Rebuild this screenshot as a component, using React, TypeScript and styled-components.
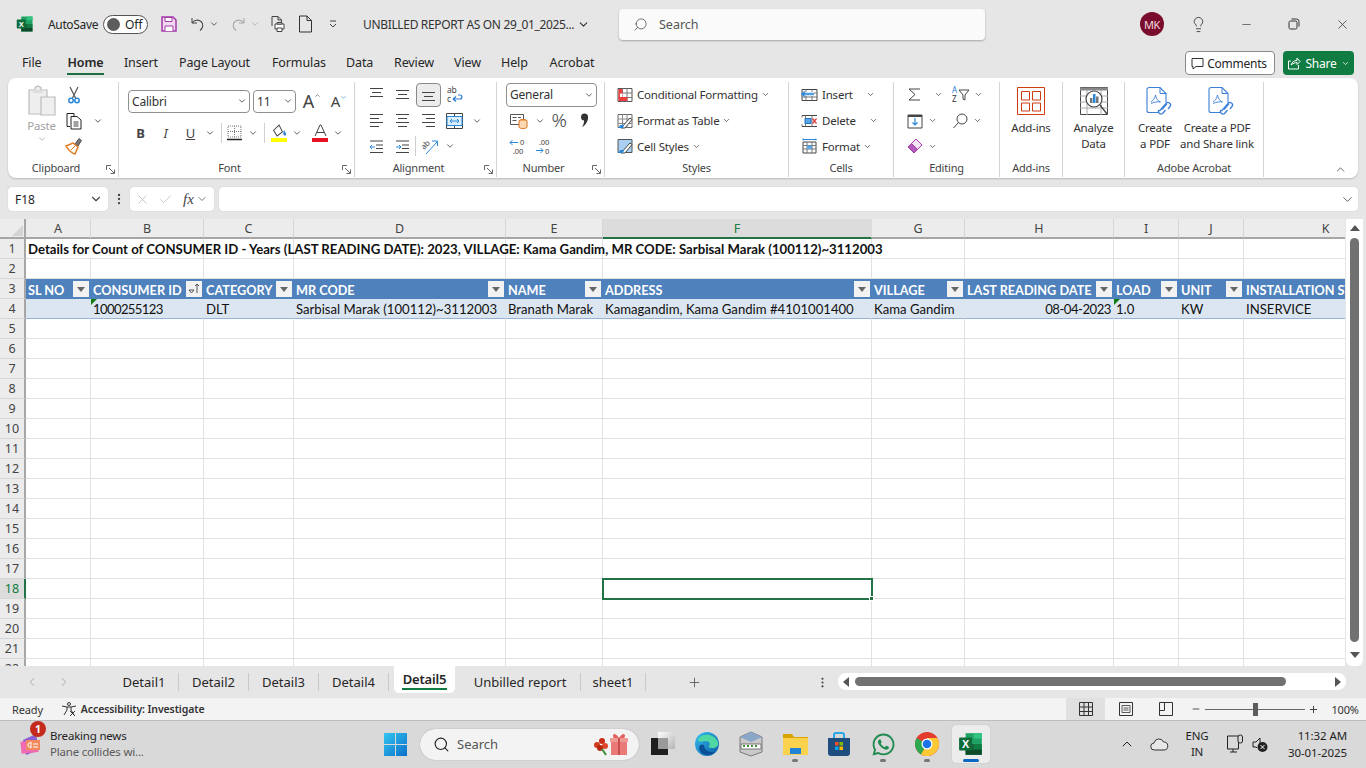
import React, {FC, ReactNode} from "react";
import styled, {createGlobalStyle} from "styled-components";
import {ChevronDown, ChevronUp, ChevronLeft, ChevronRight, Search as SearchGlyph, Lightbulb, Minus, X, Plus, MoreVertical, Check} from "lucide-react";
import {FaWhatsapp} from "react-icons/fa";

const UI = `"Noto Sans", "Liberation Sans", sans-serif`;
const CELL = `Lato, "Liberation Sans", sans-serif`;

const Global = createGlobalStyle`
html, body { margin: 0; padding: 0; background: #e6e6e6; }
body { font-family: ${UI}; color: #262626; overflow: hidden; }
svg { display: block; overflow: visible; }
`;

const Page = styled.div`
width: 1366px;
height: 768px;
display: flex;
flex-direction: column;
overflow: hidden;
background: #e6e6e6;
`;

/* ---------- generic bits ---------- */
const Slot = styled.div<{$w: number; $ml?: number}>`
flex: none;
width: ${p => p.$w}px;
margin-left: ${p => p.$ml || 0}px;
display: flex;
align-items: center;
justify-content: center;
`;
const Chev: FC<{size?: number; color?: string}> = ({size = 10, color = "#444"}) =>
  <ChevronDown size={size} color={color} strokeWidth={2}/>;

/* ---------- title bar ---------- */
const TitleBar = styled.div`
height: 48px;
flex: none;
display: flex;
align-items: center;
padding-left: 16px;
font-size: 12px;
`;
const AutoSave = styled.span`
margin-left: 14px;
width: 49px;
letter-spacing: -0.35px;
white-space: nowrap;
`;
const Toggle = styled.div`
margin-left: 6px;
width: 45px;
height: 19px;
box-sizing: border-box;
border: 1px solid #555;
border-radius: 10px;
background: #fff;
display: flex;
align-items: center;
padding-left: 3px;
gap: 5px;
font-size: 12px;
&::before { content: ""; width: 13px; height: 13px; border-radius: 50%; background: #5c5c5c; }
`;
const DocTitle = styled.div`
margin-left: 20px;
width: 256px;
flex: none;
display: flex;
align-items: center;
gap: 3px;
font-size: 12px;
letter-spacing: -0.34px;
white-space: nowrap;
color: #333;
`;
const SearchBox = styled.div`
width: 366px;
height: 31px;
flex: none;
background: #fafafa;
border-radius: 4px;
box-shadow: 0 1px 2px rgba(0,0,0,.28);
display: flex;
align-items: center;
gap: 11px;
padding-left: 14px;
box-sizing: border-box;
font-size: 12.5px;
color: #555;
`;
const Avatar = styled.div`
margin-left: 155px;
margin-right: 10px;
width: 24px;
height: 24px;
flex: none;
border-radius: 50%;
background: #7a0c2e;
color: #f1d9de;
font-size: 11px;
display: flex;
align-items: center;
justify-content: center;
letter-spacing: -0.3px;
`;

/* ---------- tab row ---------- */
const TabRow = styled.div`
height: 30px;
flex: none;
display: flex;
align-items: center;
padding: 0 12px 0 22px;
font-size: 12.5px;
`;
const MenuTab = styled.div<{$active?: boolean; $w: number}>`
position: relative;
width: ${p => p.$w}px;
flex: none;
white-space: nowrap;
text-align: center;
font-weight: ${p => (p.$active ? 600 : 400)};
letter-spacing: -0.12px;
height: 30px;
line-height: 30px;
&::after {
  content: "";
  display: ${p => (p.$active ? "block" : "none")};
  position: absolute;
  left: 0;
  right: 0;
  bottom: 3px;
  height: 2px;
  background: #1b6f43;
}
`;
const TabGap = styled.div<{$w: number}>`
width: ${p => p.$w}px;
flex: none;
`;
const Comments = styled.div`
margin-left: auto;
width: 90px;
height: 24px;
box-sizing: border-box;
background: #fff;
border: 1px solid #8a8a8a;
border-radius: 4px;
display: flex;
align-items: center;
justify-content: center;
gap: 3px;
padding-right: 2px;
font-size: 12px;
letter-spacing: -0.25px;
`;
const Share = styled.div`
margin-left: 8px;
width: 71px;
height: 24px;
background: #107c41;
color: #fff;
border-radius: 4px;
display: flex;
align-items: center;
justify-content: center;
gap: 4px;
font-size: 12px;
letter-spacing: -0.2px;
`;

/* ---------- ribbon ---------- */
const Ribbon = styled.div`
height: 100px;
flex: none;
margin: 0 8px;
background: #fff;
border-radius: 8px;
box-shadow: 0 1px 2px rgba(0,0,0,.2);
display: flex;
padding: 4px 0 1px;
box-sizing: border-box;
font-size: 11.5px;
letter-spacing: -0.2px;
color: #333;
`;
const Group = styled.div<{$w: number; $last?: boolean}>`
width: ${p => p.$w}px;
flex: none;
box-sizing: border-box;
display: flex;
flex-direction: column;
position: relative;
border-right: ${p => (p.$last ? "none" : "1px solid #d4d4d4")};
`;
const GroupBody = styled.div<{$pl?: number}>`
flex: 1;
display: flex;
padding-left: ${p => p.$pl || 0}px;
min-height: 0;
`;
const GroupLabel = styled.div<{$launch?: boolean}>`
height: 18px;
line-height: 18px;
font-size: 11px;
text-align: center;
color: #444;
padding-right: ${p => (p.$launch ? 14 : 0)}px;
`;
const Launcher = styled.div`
position: absolute;
right: 3px;
bottom: 3px;
width: 9px;
height: 9px;
`;
const Stack = styled.div`
display: flex;
flex-direction: column;
`;
const ToolRow = styled.div<{$h?: number}>`
height: ${p => p.$h || 26}px;
display: flex;
align-items: center;
white-space: nowrap;
`;
const PasteBtn = styled.div`
width: 47px;
margin-left: 10px;
display: flex;
flex-direction: column;
align-items: center;
color: #a3a3a3;
font-size: 11.5px;
gap: 1px;
padding-top: 3px;
`;
const Combo = styled.div<{$w: number; $ml?: number; $h?: number}>`
width: ${p => p.$w}px;
height: ${p => p.$h || 23}px;
margin-left: ${p => p.$ml || 0}px;
box-sizing: border-box;
border: 1px solid #8f8f8f;
border-radius: 4px;
display: flex;
align-items: center;
justify-content: space-between;
padding: 0 2px 0 3px;
font-size: 12px;
background: #fff;
flex: none;
`;
const VSep = styled.div`
width: 1px;
height: 20px;
background: #cfcfcf;
flex: none;
`;
const Selected = styled.div`
width: 25px;
height: 24px;
border: 1px solid #8a8a8a;
border-radius: 4px;
background: #ececec;
display: flex;
align-items: center;
justify-content: center;
flex: none;
box-sizing: border-box;
`;
const BoldGlyph = styled.span<{$italic?: boolean; $under?: boolean; $bold?: boolean}>`
font-size: 13px;
font-weight: ${p => (p.$bold ? 700 : 400)};
font-style: ${p => (p.$italic ? "italic" : "normal")};
text-decoration: ${p => (p.$under ? "underline" : "none")};
color: #444;
`;
const SizeGlyph = styled.span<{$s: number}>`
font-size: ${p => p.$s}px;
line-height: 1;
color: #444;
display: flex;
`;
const Percent = styled.span`
font-size: 19px;
line-height: 1;
font-weight: 300;
color: #444;
`;
const LargeBtn = styled.div<{$w: number}>`
width: ${p => p.$w}px;
flex: none;
display: flex;
flex-direction: column;
align-items: center;
padding-top: 5px;
text-align: center;
line-height: 16px;
font-size: 11.5px;
white-space: nowrap;
`;
const LargeIcon = styled.div<{$dx?: number}>`
height: 33px;
display: flex;
justify-content: center;
margin-left: ${p => p.$dx || 0}px;
`;
const StyleText = styled.span`
margin-left: 4px;
margin-right: 3px;
font-size: 11.5px;
`;
const Collapse = styled.div`
margin-top: auto;
align-self: flex-end;
margin-right: 11px;
margin-bottom: 1px;
`;

/* ---------- formula bar ---------- */
const FormulaBar = styled.div`
margin: 9px 8px 8px;
height: 24px;
flex: none;
display: flex;
align-items: center;
`;
const NameBox = styled.div`
width: 100px;
height: 24px;
background: #fff;
border-radius: 4px;
box-shadow: 0 0 1px rgba(0,0,0,.25);
box-sizing: border-box;
padding: 0 5px 0 7px;
display: flex;
align-items: center;
justify-content: space-between;
font-size: 12px;
flex: none;
`;
const FxBox = styled.div`
width: 84px;
height: 24px;
background: #fff;
border-radius: 4px;
box-shadow: 0 0 1px rgba(0,0,0,.25);
display: flex;
align-items: center;
padding-left: 5px;
gap: 8px;
box-sizing: border-box;
flex: none;
`;
const FxText = styled.span`
font-family: "Liberation Serif", serif;
font-style: italic;
font-size: 15px;
color: #444;
margin-left: 2px;
margin-right: -6px;
`;
const FormulaInput = styled.div`
flex: 1;
margin-left: 5px;
height: 24px;
background: #fff;
border-radius: 4px;
box-shadow: 0 0 1px rgba(0,0,0,.25);
display: flex;
align-items: center;
justify-content: flex-end;
padding-right: 3px;
`;

/* ---------- sheet ---------- */
const SheetWrap = styled.div`
height: 447px;
flex: none;
display: flex;
`;
const Sheet = styled.div`
width: 1345px;
height: 447px;
overflow: hidden;
background: #fff;
flex: none;
`;
const COLS = "26px 65px 113px 90px 212px 97px 269px 93px 149px 65px 65px 164px";
const SheetRow = styled.div`
display: grid;
grid-template-columns: ${COLS};
grid-template-rows: 20px;
height: 20px;
`;
const Corner = styled.div`
background: #ececec;
border-right: 2px solid #a6a6a6;
border-bottom: 2px solid #a6a6a6;
box-sizing: border-box;
display: flex;
align-items: flex-end;
justify-content: flex-end;
padding: 0 1px 1px 0;
`;
const ColHead = styled.div<{$on?: boolean}>`
box-sizing: border-box;
background: ${p => (p.$on ? "#dcdcdc" : "#ececec")};
color: ${p => (p.$on ? "#107c41" : "#444")};
border-right: 1px solid ${p => (p.$on ? "#dcdcdc" : "#d6d6d6")};
border-bottom: 2px solid ${p => (p.$on ? "#217346" : "#a6a6a6")};
font-size: 12.5px;
line-height: 19px;
text-align: center;
`;
const RowHead = styled.div<{$on?: boolean}>`
box-sizing: border-box;
background: ${p => (p.$on ? "#dcdcdc" : "#ececec")};
color: ${p => (p.$on ? "#107c41" : "#444")};
border-right: 2px solid ${p => (p.$on ? "#217346" : "#a6a6a6")};
border-bottom: 1px solid #d6d6d6;
font-size: 12.5px;
line-height: 19px;
text-align: center;
`;
const Cell = styled.div<{$kind?: "plain" | "head" | "band" | "title"; $right?: boolean; $sel?: boolean; $flag?: boolean; $tight?: number}>`
position: relative;
box-sizing: border-box;
min-width: 0;
white-space: nowrap;
font-family: ${CELL};
font-size: ${p => (p.$kind === "head" ? 12.7 : p.$kind === "title" ? 13.2 : 13.15)}px;
letter-spacing: ${p => p.$tight || 0}px;
line-height: 19px;
padding: 2px 2px 0;
display: flex;
align-items: center;
justify-content: ${p => (p.$right ? "flex-end" : "flex-start")};
color: ${p => (p.$kind === "head" ? "#fff" : "#111")};
font-weight: ${p => (p.$kind === "head" || p.$kind === "title" ? 700 : 400)};
background: ${p => (p.$kind === "head" ? "#4f81bd" : p.$kind === "band" ? "#dce6f1" : "#fff")};
border-right: 1px solid ${p => (p.$kind === "head" ? "#4f81bd" : p.$kind === "band" ? "#dce6f1" : "#e1e1e1")};
border-bottom: 1px solid ${p => (p.$kind === "head" ? "#4f81bd" : p.$kind === "band" ? "#95b3d7" : "#e1e1e1")};
${p => p.$kind === "title" && "border-right: none; overflow: visible; z-index: 1; background: transparent;"}
${p => p.$kind === "head" && "justify-content: space-between; overflow: hidden; padding-top: 1px;"}
${p => p.$sel && `
  outline: 2px solid #217346;
  outline-offset: -1px;
  z-index: 2;
  &::after {
    content: "";
    position: absolute;
    right: -3px;
    bottom: -3px;
    width: 5px;
    height: 5px;
    background: #217346;
    border: 1px solid #fff;
    box-sizing: border-box;
  }
`}
${p => p.$flag && `
  &::before {
    content: "";
    position: absolute;
    left: 0;
    top: 0;
    border-top: 6px solid #107c10;
    border-right: 6px solid transparent;
  }
`}
`;
const HeadText = styled.span`
position: relative;
top: 1px;
`;
const FilterBtn = styled.div`
width: 16px;
height: 16px;
flex: none;
margin-right: -1px;
background: #f2f2f2;
display: flex;
align-items: center;
justify-content: center;
`;
const ScrollCol = styled.div`
width: 17px;
margin-left: 1px;
height: 447px;
flex: none;
background: #fff;
border-radius: 0 0 6px 6px;
display: flex;
flex-direction: column;
align-items: center;
`;
const ScrollThumbV = styled.div`
width: 9px;
height: 404px;
margin: 3px 0 4px;
border-radius: 5px;
background: #717171;
`;
const ArrowBtn = styled.div`
height: 14px;
margin-top: 2px;
display: flex;
align-items: center;
justify-content: center;
`;

/* ---------- sheet tabs ---------- */
const SheetBar = styled.div`
height: 32px;
flex: none;
display: flex;
align-items: flex-start;
background: #e6e6e6;
font-size: 13px;
`;
const SheetTab = styled.div<{$w: number; $active?: boolean; $gap?: number}>`
position: relative;
width: ${p => p.$w}px;
height: ${p => (p.$active ? 27 : 18)}px;
margin-top: ${p => (p.$active ? 0 : 7)}px;
margin-left: ${p => p.$gap || 0}px;
line-height: ${p => (p.$active ? 26 : 18)}px;
flex: none;
box-sizing: border-box;
text-align: center;
white-space: nowrap;
letter-spacing: ${p => (p.$active ? "-0.2px" : "0")};
font-weight: ${p => (p.$active ? 600 : 400)};
background: ${p => (p.$active ? "#fff" : "transparent")};
border-radius: ${p => (p.$active ? "0 0 5px 5px" : "0")};
border-right: ${p => (p.$active ? "none" : "1px solid #c9c9c9")};
&::after {
  content: "";
  display: ${p => (p.$active ? "block" : "none")};
  position: absolute;
  left: 8px;
  right: 8px;
  bottom: 3px;
  height: 2px;
  background: #107c41;
}
`;
const NavSlot = styled(Slot)`
height: 32px;
`;
const HScroll = styled.div`
width: 508px;
height: 17px;
margin: 7px 0 0 6px;
flex: none;
background: #fff;
border-radius: 8px;
display: flex;
align-items: center;
padding: 0 5px 0 5px;
box-sizing: border-box;
`;
const HThumb = styled.div`
width: 431px;
height: 9px;
margin-left: 6px;
border-radius: 5px;
background: #717171;
`;
const Triangle = styled.div<{$dir: "left" | "right" | "up" | "down"}>`
width: 0;
height: 0;
flex: none;
${p => p.$dir === "left" && "border-top: 5px solid transparent; border-bottom: 5px solid transparent; border-right: 6px solid #555;"}
${p => p.$dir === "right" && "border-top: 5px solid transparent; border-bottom: 5px solid transparent; border-left: 6px solid #555; margin-left: auto;"}
${p => p.$dir === "up" && "border-left: 5px solid transparent; border-right: 5px solid transparent; border-bottom: 6px solid #555;"}
${p => p.$dir === "down" && "border-left: 5px solid transparent; border-right: 5px solid transparent; border-top: 6px solid #555;"}
`;

/* ---------- status bar ---------- */
const StatusBar = styled.div`
height: 22px;
flex: none;
background: #f3f3f3;
border-bottom: 1px solid #bdbdbd;
display: flex;
align-items: center;
padding-left: 12px;
font-size: 11px;
color: #333;
letter-spacing: -0.15px;
`;
const A11y = styled.span`
margin-left: 4px;
font-weight: 600;
font-size: 10.5px;
letter-spacing: -0.1px;
`;
const ViewBtn = styled.div<{$w: number; $on?: boolean; $ml?: number}>`
width: ${p => p.$w}px;
margin-left: ${p => p.$ml || 0}px;
height: 22px;
flex: none;
background: ${p => (p.$on ? "#e0e0e0" : "transparent")};
display: flex;
align-items: center;
justify-content: center;
`;
const Zoom = styled.div`
width: 100px;
height: 1px;
background: #666;
position: relative;
flex: none;
&::after {
  content: "";
  position: absolute;
  left: 48px;
  top: -6px;
  width: 5px;
  height: 13px;
  background: #5c5c5c;
}
`;
const ZoomPct = styled.span`
margin-left: 10px;
font-size: 11px;
letter-spacing: -0.2px;
`;

/* ---------- taskbar ---------- */
const Taskbar = styled.div`
height: 46px;
padding-bottom: 1px;
flex: none;
background: #d9d9d9;
display: flex;
align-items: center;
font-size: 11.5px;
color: #1f1f1f;
`;
const News = styled.div`
width: 384px;
flex: none;
box-sizing: border-box;
padding-left: 20px;
display: flex;
align-items: center;
gap: 9px;
`;
const NewsIcon = styled.div`
position: relative;
width: 21px;
height: 24px;
`;
const Badge = styled.div`
position: absolute;
left: 10px;
top: -11px;
width: 16px;
height: 16px;
border-radius: 50%;
background: #c42b1c;
color: #fff;
font-size: 10.5px;
font-weight: 700;
text-align: center;
line-height: 16px;
`;
const NewsText = styled.div`
line-height: 16px;
letter-spacing: -0.2px;
white-space: nowrap;
`;
const NewsSub = styled.div`
color: #5a5a5a;
`;
const TaskSearch = styled.div`
width: 219px;
height: 31px;
margin-left: 13px;
flex: none;
background: #f3f3f3;
border-radius: 16px;
box-shadow: 0 0 1px rgba(0,0,0,.4);
display: flex;
align-items: center;
padding: 0 9px 0 13px;
box-sizing: border-box;
gap: 7px;
font-size: 13px;
color: #555;
`;
const GiftSlot = styled.div`
margin-left: auto;
`;
const TaskSlot = styled.div<{$running?: boolean; $active?: boolean}>`
position: relative;
width: 44px;
height: 47px;
flex: none;
display: flex;
align-items: center;
justify-content: center;
&::before {
  content: "";
  display: ${p => (p.$active ? "block" : "none")};
  position: absolute;
  left: 3px;
  right: 3px;
  top: 4px;
  bottom: 5px;
  background: #ececec;
  border-radius: 4px;
  box-shadow: 0 0 1px rgba(0,0,0,.25);
}
&::after {
  content: "";
  display: ${p => (p.$running || p.$active ? "block" : "none")};
  position: absolute;
  bottom: 6px;
  left: 50%;
  transform: translateX(-50%);
  width: ${p => (p.$active ? 16 : 6)}px;
  height: 3px;
  border-radius: 2px;
  background: ${p => (p.$active ? "#0a68c4" : "#777")};
}
& > svg { position: relative; z-index: 1; }
`;
const Lang = styled.div`
width: 44px;
flex: none;
text-align: center;
line-height: 16px;
font-size: 11.5px;
letter-spacing: -0.2px;
`;
const Clock = styled.div`
margin-left: auto;
padding-right: 19px;
text-align: right;
line-height: 17px;
font-size: 11.5px;
letter-spacing: -0.1px;
`;

/* ---------- drawn icons ---------- */
const I: FC<{w?: number; h?: number; vb?: string; children: ReactNode}> = ({w = 16, h = 16, vb, children}) =>
  <svg width={w} height={h} viewBox={vb || `0 0 ${w} ${h}`} fill="none">{children}</svg>;

const SMALL = {fontFamily: "Noto Sans", fill: "#444"};

const ExcelLogo: FC<{s?: number}> = ({s = 18}) => <I w={s} h={s} vb="0 0 24 24">
  <path d="M7 2h15v20H7z" fill="#21a366"/>
  <path d="M14.500 2H22v5h-7.500z" fill="#33c481"/>
  <path d="M14.500 12H22v5h-7.500z" fill="#107c41"/>
  <path d="M7 12h7.500v5H7z" fill="#185c37"/>
  <path d="M7 17h15v5H7z" fill="#0c4a2a"/>
  <rect x="1" y="6" width="12" height="12" rx="1" fill="#0e6b3a"/>
  <text x="7" y="15.500" textAnchor="middle" fontFamily="Liberation Sans" fontWeight="700" fontSize="10" fill="#fff">X</text>
</I>;
const SaveIcon = () => <I><path d="M1 1h11l3 3v11H1z" fill="#f1d7f2" stroke="#a33aa8" strokeWidth="1.500"/><path d="M4 1.500h7v4H4z" fill="#fff" stroke="#a33aa8"/><path d="M4 15v-5h8v5" fill="#fff" stroke="#a33aa8"/></I>;
const Undo: FC<{c: string}> = ({c}) => <I w={17} h={17}><path d="M3 2v5h5" stroke={c}/><path d="M3 7c2-3 6-4 9-1.500s2 7-1 9" stroke={c} strokeWidth="1.100"/></I>;
const Redo: FC<{c: string}> = ({c}) => <I w={17} h={17}><path d="M14 2v5H9" stroke={c}/><path d="M14 7c-2-3-6-4-9-1.500s-2 7 1 9" stroke={c} strokeWidth="1.100"/></I>;
const PrintPreview = () => <I w={17} h={18}><path d="M3 11V1.500h6l3.500 3.500v2" stroke="#444"/><path d="M9 1.500V5h3.500" stroke="#444"/><path d="M6 9h9v5H6z" fill="#fff" stroke="#444"/><path d="M8 7.500h5V9H8zM8 13h5v3.500H8z" fill="#fff" stroke="#444"/></I>;
const NewDoc = () => <I w={15} h={18}><path d="M1.500 1h7.500l4.500 4.500V17h-12z" stroke="#333"/><path d="M9 1v4.500h4.500" stroke="#333"/></I>;
const Customize = () => <I w={10} h={10}><path d="M2 2h6" stroke="#444"/><path d="M2 5l3 3 3-3" stroke="#444"/></I>;
const RestoreIcon = () => <I w={12} h={12}><rect x="1" y="3" width="8" height="8" rx="1.500" stroke="#333"/><path d="M3.500 1h5a2.500 2.500 0 0 1 2.500 2.500v5" stroke="#333"/></I>;
const CommentIcon = () => <I w={13} h={13}><path d="M1 1.500h11v8H5l-3 2.500v-2.500H1z" stroke="#333"/></I>;
const ShareIcon = () => <I w={14} h={14}><path d="M4 5H1.500v8h10V9" stroke="#fff"/><path d="M4 9c1-3 3-4.500 6-4.500V2l3 3.500-3 3V6.500C8 6.500 6 7.500 4 9z" stroke="#fff"/></I>;
const PasteIcon = () => <I w={28} h={32}><path d="M1 5h6V2.500L10 1l3 1.500V5h6v24H1z" fill="#eee" stroke="#bdbdbd" strokeWidth="1.200"/><path d="M5 5h10v3H5z" fill="#ddd"/><path d="M13 12h14v18H13z" fill="#efefef" stroke="#bdbdbd" strokeWidth="1.200"/></I>;
const CutIcon = () => <I w={16} h={18}><path d="M4 1l5.500 11M12 1L6.500 12" stroke="#555" strokeWidth="1.200"/><circle cx="5" cy="14.500" r="2.200" stroke="#2b88d8" strokeWidth="1.500"/><circle cx="11" cy="14.500" r="2.200" stroke="#2b88d8" strokeWidth="1.500"/></I>;
const CopyIcon = () => <I w={16} h={18}><path d="M4 14.500H1V1.500h7V4" stroke="#222"/><path d="M5 4.500h6L15 8v9H5z" fill="#fff" stroke="#222"/><path d="M7.500 10h5M7.500 12h5M7.500 14h5" stroke="#444"/></I>;
const BrushIcon = () => <I w={18} h={18}><path d="M10 7l4-5.500 2.500 2L13 9z" fill="#777" stroke="#555"/><path d="M1 9l7-3 5 4-3 7C8 17 3 13 1 9z" fill="#fff" stroke="#e07a1f" strokeWidth="1.500"/><path d="M6 13l4-4" stroke="#e07a1f"/></I>;
const BordersIcon = () => <I w={15} h={16}><path d="M1 1h13v11H1z" stroke="#777" strokeDasharray="1 1"/><path d="M7.500 1v11M1 6.500h13" stroke="#777" strokeDasharray="1 1"/><path d="M0 14.500h15" stroke="#222" strokeWidth="1.500"/></I>;
const FillIcon = () => <I w={17} h={19}><path d="M7 1l-4.500 6 4.500 5 4.500-5z" stroke="#444" transform="rotate(10 7 7)"/><path d="M13 6c1 2 2 3 2 4.500s-2 1.500-2.500 0 0-3 .5-4.500z" fill="#2b7cd3"/><path d="M0 14h16v4H0z" fill="#ffff00"/></I>;
const FontColorIcon = () => <I w={17} h={19}><path d="M3 12L8 1h1l5 11M5 8.500h7" stroke="#444"/><path d="M0 14h16v4H0z" fill="#e81123"/></I>;
const Lines: FC<{ys: [number, number][]}> = ({ys}) => <I w={15} h={15}>{ys.map(([x1, x2], i) => <path key={i} d={`M${x1} ${1.500 + i * 4}H${x2}`} stroke="#444"/>)}</I>;
const VAlign: FC<{top: number}> = ({top}) => <I w={15} h={15}><path d={`M1 ${top + .500}h13M3 ${top + 4.500}h9M1 ${top + 8.500}h13`} stroke="#444"/></I>;
const WrapIcon = () => <I w={17} h={18}><text x="1" y="7" fontSize="8.500" {...SMALL}>ab</text><text x="1" y="16" fontSize="8.500" {...SMALL}>c</text><path d="M7 13h7c2.500 0 2.500-4 0-4h-2M7 13l3-2.500M7 13l3 2.500" stroke="#2b7cd3" strokeWidth="1.200"/></I>;
const MergeIcon = () => <I w={17} h={16}><path d="M.500.500h16v15H.500z" stroke="#444"/><path d="M8.500.500v3M8.500 12.500v3" stroke="#444"/><path d="M1 3.500h15v9H1z" fill="#ddeefb" stroke="#2b88d8"/><path d="M4 8h9M4 8l2-2M4 8l2 2M13 8l-2-2M13 8l-2 2" stroke="#2b88d8"/></I>;
const IndentIcon: FC<{flip?: boolean}> = ({flip}) => <I w={15} h={15}><path d="M1 2h13M7 6h7M7 9.500h7M1 13.500h13" stroke="#444"/><path d={flip ? "M1 8h5M4 6l2 2-2 2" : "M6 8H1M3 6L1 8l2 2"} stroke="#2b88d8"/></I>;
const OrientIcon = () => <I w={17} h={17}><text x="-1" y="9" fontSize="8" {...SMALL} transform="rotate(-45 4 7)">ab</text><path d="M4 16L15 4M10 3h5.500v5" stroke="#2b88d8"/></I>;
const AcctIcon = () => <I w={18} h={16}><path d="M.500 1.500h13v10H.500z" fill="#fff" stroke="#555"/><path d="M2.500 4.500h4M2.500 7.500h4M8 4.500h3" stroke="#555"/><ellipse cx="13" cy="8" rx="4" ry="1.500" fill="#f6b26b" stroke="#d9731d"/><path d="M9 8v6c0 2 8 2 8 0V8" fill="#fbd9b5" stroke="#d9731d"/></I>;
const DecIcon: FC<{more?: boolean}> = ({more}) => <I w={18} h={17}>
  {more
    ? <><text x="4" y="7" fontSize="7.500" {...SMALL}>.00</text><text x="10" y="16" fontSize="7.500" {...SMALL}>0</text><path d="M1 12.500h7M5.500 10l2.500 2.500L5.500 15" stroke="#2b88d8"/></>
    : <><text x="11" y="7" fontSize="7.500" {...SMALL}>0</text><text x="4" y="16" fontSize="7.500" {...SMALL}>.00</text><path d="M9 4.500H1M3.500 2L1 4.500 3.500 7" stroke="#2b88d8"/></>}
</I>;
const CommaIcon = () => <I w={9} h={15}><circle cx="4.500" cy="4" r="3.500" fill="#333"/><path d="M8 4c0 4-2 8-6 10 2-3 2-5 2-7z" fill="#333"/></I>;
const CondIcon = () => <I><path d="M1 1.500h14v13H1z" fill="#fff" stroke="#555"/><path d="M1 6h14M1 10.500h14M5.500 1v14M10 1v14" stroke="#777"/><path d="M1.500 2h4v8h5v4h-9z" fill="#ee3f3f"/><path d="M3 6.500h2.500v3.500H3z" fill="#fff"/></I>;
const TableIcon = () => <I><path d="M1 1.500h14v13H1z" fill="#fff" stroke="#666"/><path d="M1 6h14M1 10.500h14M5.500 1v14M10 1v14" stroke="#888"/><path d="M4 15l9-10 2 1.500L8 15z" fill="#fff" stroke="#444"/><path d="M1.500 15H6l1-3H3z" fill="#2b88d8"/></I>;
const CellStyleIcon = () => <I><path d="M1 1.500h14v13H1z" fill="#a9d0f2" stroke="#555"/><path d="M4 15l9-10 2 1.500L8 15z" fill="#fff" stroke="#444"/><path d="M1.500 15H6l1-3H3z" fill="#2b88d8"/></I>;
const InsertCellIcon = () => <I w={17}><path d="M1 2.500h15v11H1z" fill="#fff" stroke="#444"/><path d="M1 6h15M1 10h15M5 2.500v11M11 2.500v11" stroke="#777"/><path d="M4 5h9v4H4z" fill="#cfe6fa"/><path d="M13 7H1M4 4.500L1 7l3 2.500" stroke="#2b88d8" strokeWidth="1.400"/></I>;
const DeleteCellIcon = () => <I w={17}><path d="M1 2.500h15M1 13.500h15" stroke="#444"/><path d="M4.500 2.500v11M11 2.500v11M1 2.500v2M1 11v2.500" stroke="#777"/><path d="M4 5.500h6v5H4z" fill="#5ba7e6" stroke="#1e6ec1"/><path d="M11.500 5.500l4 5M15.500 5.500l-4 5" stroke="#e04343" strokeWidth="1.300"/></I>;
const FormatCellIcon = () => <I w={17}><path d="M2 4h13v11H2z" fill="#fff" stroke="#444"/><path d="M2 7.500h13M2 11h13M6 4v11M11 4v11" stroke="#777"/><path d="M6 7.500h5V11H6z" fill="#5ba7e6"/><path d="M2 1.500h13M2 .500v2M15 .500v2" stroke="#2b88d8"/></I>;
const SumIcon = () => <I w={15} h={15}><path d="M13 2H2l6 5.500L2 13h11" stroke="#444"/></I>;
const SortFilterIcon = () => <I w={18} h={17}><text x="0" y="7" fontSize="8" fontFamily="Noto Sans" fill="#2b7cd3">A</text><text x="0" y="16" fontSize="8" fontFamily="Noto Sans" fill="#333">Z</text><path d="M7 4h10l-4 5v5l-2-1V9z" stroke="#444"/></I>;
const FillDown = () => <I><path d="M1 2h14v13H1z" stroke="#444"/><path d="M1 3h14" stroke="#444" strokeWidth="2"/><path d="M8 5v7M5.500 9.500L8 12l2.500-2.500" stroke="#2b88d8" strokeWidth="1.200"/></I>;
const FindIcon = () => <I><circle cx="10" cy="6" r="5" stroke="#444"/><path d="M6.500 9.500L1.500 15" stroke="#444"/></I>;
const EraseIcon = () => <I w={16} h={16}><path d="M1 9l8-8 6 6-8 8z" fill="#f3e4f5" stroke="#a33aa8"/><path d="M4.500 5.500l6 6L7 15 1 9z" fill="#b45cbd" stroke="#a33aa8"/></I>;
const AddinsIcon = () => <I w={28} h={28}><path d="M.500.500h27v27H.500z" stroke="#d13b10"/><path d="M4.500 4.500h8v8.500h-8zM15.500 4.500h8v8.500h-8zM4.500 16h8v8h-8zM15.500 16h8v8h-8z" stroke="#d13b10"/></I>;
const AnalyzeIcon = () => <I w={28} h={29}><path d="M.500.500h27v27H.500z" fill="#fff" stroke="#444"/><path d="M0 .500h28v3H0z" fill="#888"/><path d="M0 9h28M0 15h28M0 21h28M7 3v25M21 3v25" stroke="#aaa"/><circle cx="14" cy="12" r="8" fill="#fff" stroke="#444" strokeWidth="1.200"/><path d="M10 11h2.500v5H10z" fill="#777"/><path d="M13 7h2.500v9H13z" fill="#2b88d8"/><path d="M16 9.500h2.500V16H16z" fill="#777"/><path d="M20 18l7 9" stroke="#444" strokeWidth="1.300"/></I>;
const PdfIcon = () => <I w={26} h={30}><path d="M14 25.500H4a2 2 0 0 1-2-2V2.500a2 2 0 0 1 2-2h11l6 6v9" stroke="#3b7fd9" strokeWidth="1.100"/><path d="M15 .500v6h6" stroke="#3b7fd9"/><path d="M6 15c2-1 4-4 4.500-7 .5 3 2 6 5 7-3-.5-6 0-9.500 1.500" stroke="#3b7fd9" strokeWidth=".9"/><path d="M14.500 24l6.500-7.500a2.500 2.500 0 0 1 4 3l-2 2.500M20.500 23l-2.500 3a2.500 2.500 0 0 1-4-3M17 22.500l5-6" stroke="#3b7fd9" strokeWidth="1.300"/></I>;
const Launch = () => <I w={9} h={9}><path d="M.500 5V.500H5M3 3l5 5M8.500 4.500v4h-4" stroke="#666"/></I>;
const A11yIcon = () => <I w={16} h={16}><circle cx="8" cy="3" r="1.500" stroke="#333"/><path d="M1 5l5 1h4l5-1M6 6v3l-3 5M10 6v3l3 5" stroke="#333"/><path d="M9 10l5 5M14 10l-5 5" stroke="#333"/></I>;
const NormalView = () => <I w={14} h={14}><path d="M.500.500h13v13H.500zM.500 5h13M.500 9.500h13M5 .500v13M9.500.500v13" stroke="#333"/></I>;
const PageView = () => <I w={14} h={14}><path d="M.500.500h13v13H.500z" stroke="#333"/><path d="M3 3.500h8v7H3zM4.500 6h5M4.500 8h5" stroke="#333" strokeWidth=".8"/></I>;
const BreakView = () => <I w={14} h={14}><path d="M.500.500h13v13H.500zM.500 8.500h5M5.500.500v8" stroke="#333"/></I>;
const SortFilter = () => <I w={12} h={12}><path d="M1 7h5L3.500 10zM9 1v9M7 3l2-2 2 2" fill="none" stroke="#555"/></I>;
const FilterArrow = () => <I w={8} h={5}><path d="M0 0h8L4 5z" fill="#666"/></I>;
const NewsLogo = () => <I w={21} h={24}><path d="M3 8l13-6 3 16-13 5z" fill="#8a5ed6"/><path d="M1 9h17v12H1z" fill="#ef6ab0" transform="rotate(-6 9 15)"/><path d="M6 8h14v10H6z" fill="#f08a5d"/><path d="M8 12l3-2v6l-3-2zM13 12h5M13 15h5" stroke="#fff"/></I>;
const WinLogo = () => <I w={23} h={23}><defs><linearGradient id="w" x1="0" y1="0" x2="1" y2="1"><stop offset="0" stopColor="#34c5f2"/><stop offset="1" stopColor="#0a70c9"/></linearGradient></defs><path d="M0 0h11v11H0zM12 0h11v11H12zM0 12h11v11H0zM12 12h11v11H12z" fill="url(#w)"/></I>;
const GiftIcon = () => <I w={40} h={24}><circle cx="7" cy="13" r="3" fill="#d23a1e"/><circle cx="12" cy="9" r="3" fill="#c92d16"/><circle cx="15" cy="14" r="3" fill="#e0452a"/><circle cx="10" cy="16" r="3" fill="#b62512"/><path d="M12 17l4 6" stroke="#3f8f3a" strokeWidth="2"/><path d="M21 8h16v15H21z" fill="#ea7a78"/><path d="M20 6h18v4H20z" fill="#f09a94"/><path d="M28 6h2v17h-2z" fill="#c94f4f"/><path d="M29 6c-3-5-6-5-6-2s3 2 6 2c3 0 6 1 6-2s-3-3-6 2z" fill="#e2615f"/></I>;
const TaskView = () => <I w={24} h={24}><defs><linearGradient id="tv" x1="0" y1="0" x2="1" y2="1"><stop offset="0" stopColor="#fdfdfd"/><stop offset="1" stopColor="#b5b5b5"/></linearGradient></defs><path d="M7 0h17v17H7z" fill="url(#tv)"/><path d="M0 6h17v17H0z" fill="#1f1f1f"/><path d="M7 6h10v11H7z" fill="#9a9a9a"/></I>;
const EdgeIcon = () => <I w={24} h={24}><defs><linearGradient id="e" x1="0" y1="0" x2="1" y2="1"><stop offset="0" stopColor="#35c1f1"/><stop offset="1" stopColor="#0c59a4"/></linearGradient></defs><circle cx="12" cy="12" r="12" fill="url(#e)"/><path d="M3 7c4-6 16-6 20 3 1 4-2 6-6 6-3 0-4-1-3-2 2-2 0-5-3-5-4 0-8 2-8-2z" fill="#4fd8a4"/><path d="M9 13c0 5 5 8 11 7-4 4-12 4-15-1-2-4 0-8 4-6z" fill="#0b4f97"/></I>;
const AppIcon = () => <I w={26} h={26}><path d="M13 1l11 5v15l-11 4-11-4V6z" fill="#c9c9c9" stroke="#7a7a7a"/><path d="M2 6l11 5 11-5-11-5z" fill="#8aa6c9"/><path d="M3 13h20v5H3z" fill="#fff" stroke="#777"/><path d="M5 15h2M9 15h2M13 15h2M17 15h2" stroke="#3f8f3a" strokeWidth="2"/></I>;
const FolderIcon = () => <I w={25} h={24}><path d="M0 2h9l2 3h14v3H0z" fill="#d9a400"/><path d="M0 6h25v17H0z" fill="#fbd24e"/><path d="M7 16h11v6H7z" fill="#1f84d6"/></I>;
const StoreIcon = () => <I w={24} h={24}><path d="M7 6V3a2 2 0 0 1 2-2h6a2 2 0 0 1 2 2v3" stroke="#29a6e8" strokeWidth="2"/><path d="M1 6h22v15a3 3 0 0 1-3 3H4a3 3 0 0 1-3-3z" fill="#1f4e7e"/><path d="M8 10h3.500v3.500H8z" fill="#f25022"/><path d="M12.500 10H16v3.500h-3.500z" fill="#7fba00"/><path d="M8 14.500h3.500V18H8z" fill="#00a4ef"/><path d="M12.500 14.500H16V18h-3.500z" fill="#ffb900"/></I>;
const ChromeIcon = () => <I w={24} h={24}><circle cx="12" cy="12" r="12" fill="#e33b2e"/><path d="M12 12L1.600 6a12 12 0 0 0 4.400 16.400z" fill="#2da94f"/><path d="M12 12l-6 10.400A12 12 0 0 0 22.400 6H12z" fill="#fcc934"/><circle cx="12" cy="12" r="5.500" fill="#fff"/><circle cx="12" cy="12" r="4.300" fill="#1a73e8"/></I>;
const MonitorIcon = () => <I w={17} h={20}><path d="M.500 2h11v13H.500zM3 18h7M6 15v3" stroke="#222"/><rect x="11" y="1" width="4.500" height="8" rx="2" fill="#d9d9d9" stroke="#222"/></I>;
const SpeakerIcon = () => <I w={16} h={18}><path d="M1 7h3l4-4v10" stroke="#222"/><path d="M1 7v5h3l1 1" stroke="#222"/><circle cx="10.500" cy="12" r="5" fill="#222"/><path d="M8.500 10l4 4M12.500 10l-4 4" stroke="#fff"/></I>;
const CloudIcon = () => <I w={18} h={14}><path d="M4.500 13a3.500 3.500 0 0 1-.5-7 5 5 0 0 1 9.500-1 4 4 0 0 1 .5 8z" fill="#e8e8e8" stroke="#333"/></I>;

/* ---------- data ---------- */
const columns = ["A", "B", "C", "D", "E", "F", "G", "H", "I", "J", "K"];
const heads = ["SL NO", "CONSUMER ID", "CATEGORY", "MR CODE", "NAME", "ADDRESS", "VILLAGE", "LAST READING DATE", "LOAD", "UNIT", "INSTALLATION STATUS"];
const band = ["", "1000255123", "DLT", "Sarbisal Marak (100112)~3112003", "Branath Marak", "Kamagandim, Kama Gandim #4101001400", "Kama Gandim", "08-04-2023", "1.0", "KW", "INSERVICE"];
const tightness: Record<string, number> = {B: -0.65, H: -0.5};
const menu: [string, number, number][] = [["File", 19, 26], ["Home", 37, 20], ["Insert", 32, 23], ["Page Layout", 71, 22], ["Formulas", 53, 21], ["Data", 27, 21], ["Review", 40, 20], ["View", 27, 20], ["Help", 26, 22], ["Acrobat", 46, 0]];
const sheets: [string, number][] = [["Detail1", 69], ["Detail2", 70], ["Detail3", 70], ["Detail4", 70]];

const SheetGrid: FC = () => <Sheet>
  <SheetRow>
    <Corner><I w={11} h={11}><path d="M11 0v11H0z" fill="#d4d4d4"/></I></Corner>
    {columns.map(c => <ColHead key={c} $on={c === "F"}>{c}</ColHead>)}
  </SheetRow>
  {Array.from({length: 22}, (_, i) => i + 1).map(n => <SheetRow key={n}>
    <RowHead $on={n === 18}>{n}</RowHead>
    {columns.map((c, i) => {
      if (n === 1) return <Cell key={c} $kind={i === 0 ? "title" : "plain"}>
        {i === 0 && "Details for Count of CONSUMER ID - Years (LAST READING DATE): 2023, VILLAGE: Kama Gandim, MR CODE: Sarbisal Marak (100112)~3112003"}
      </Cell>;
      if (n === 3) return <Cell key={c} $kind="head">
        <HeadText>{heads[i]}</HeadText>
        {i < 10 && <FilterBtn>{i === 1 ? <SortFilter/> : <FilterArrow/>}</FilterBtn>}
      </Cell>;
      if (n === 4) return <Cell key={c} $kind="band" $right={c === "H"} $tight={tightness[c]} $flag={c === "B" || c === "I"}>{band[i]}</Cell>;
      return <Cell key={c} $sel={n === 18 && c === "F"}/>;
    })}
  </SheetRow>)}
</Sheet>;

const RibbonBar: FC = () => <Ribbon>
  <Group $w={111}>
    <GroupBody>
      <PasteBtn><PasteIcon/>Paste<Chev color="#aaa"/></PasteBtn>
      <Stack>
        <ToolRow><Slot $w={18}><CutIcon/></Slot></ToolRow>
        <ToolRow><Slot $w={18}><CopyIcon/></Slot><Slot $w={14} $ml={8}><Chev/></Slot></ToolRow>
        <ToolRow><Slot $w={18}><BrushIcon/></Slot></ToolRow>
      </Stack>
    </GroupBody>
    <GroupLabel $launch>Clipboard</GroupLabel>
    <Launcher><Launch/></Launcher>
  </Group>
  <Group $w={236}>
    <GroupBody $pl={9}>
      <Stack>
        <ToolRow $h={38}>
          <Combo $w={122}>Calibri<Chev/></Combo>
          <Combo $w={43} $ml={3}>11<Chev/></Combo>
          <Slot $w={22} $ml={5}><SizeGlyph $s={18}>A<ChevronUp size={7} strokeWidth={2}/></SizeGlyph></Slot>
          <Slot $w={22} $ml={5}><SizeGlyph $s={15}>A<ChevronDown size={7} strokeWidth={2} color="#2b7cd3"/></SizeGlyph></Slot>
        </ToolRow>
        <ToolRow>
          <Slot $w={25}><BoldGlyph $bold>B</BoldGlyph></Slot>
          <Slot $w={25}><BoldGlyph $italic>I</BoldGlyph></Slot>
          <Slot $w={25}><BoldGlyph $under>U</BoldGlyph></Slot>
          <Slot $w={14}><Chev/></Slot>
          <Slot $w={4}/><VSep/>
          <Slot $w={24}><BordersIcon/></Slot>
          <Slot $w={14}><Chev/></Slot>
          <Slot $w={4}/><VSep/>
          <Slot $w={24} $ml={2}><FillIcon/></Slot>
          <Slot $w={12}><Chev/></Slot>
          <Slot $w={24} $ml={5}><FontColorIcon/></Slot>
          <Slot $w={12}><Chev/></Slot>
        </ToolRow>
      </Stack>
    </GroupBody>
    <GroupLabel $launch>Font</GroupLabel>
    <Launcher><Launch/></Launcher>
  </Group>
  <Group $w={142}>
    <GroupBody $pl={8}>
      <Stack>
        <ToolRow>
          <Slot $w={26}><VAlign top={1}/></Slot>
          <Slot $w={26}><VAlign top={3}/></Slot>
          <Slot $w={27}><Selected><VAlign top={5}/></Selected></Slot>
          <Slot $w={25}><WrapIcon/></Slot>
        </ToolRow>
        <ToolRow>
          <Slot $w={26}><Lines ys={[[1, 14], [1, 10], [1, 14], [1, 10]]}/></Slot>
          <Slot $w={26}><Lines ys={[[1, 14], [3, 12], [1, 14], [3, 12]]}/></Slot>
          <Slot $w={26}><Lines ys={[[1, 14], [5, 14], [1, 14], [5, 14]]}/></Slot>
          <Slot $w={26}><MergeIcon/></Slot>
          <Slot $w={20}><Chev/></Slot>
        </ToolRow>
        <ToolRow>
          <Slot $w={26}><IndentIcon/></Slot>
          <Slot $w={26}><IndentIcon flip/></Slot>
          <VSep/>
          <Slot $w={26} $ml={1}><OrientIcon/></Slot>
          <Slot $w={14}><Chev/></Slot>
        </ToolRow>
      </Stack>
    </GroupBody>
    <GroupLabel $launch>Alignment</GroupLabel>
    <Launcher><Launch/></Launcher>
  </Group>
  <Group $w={108}>
    <GroupBody $pl={9}>
      <Stack>
        <ToolRow><Combo $w={91} $h={24}>General<Chev/></Combo></ToolRow>
        <ToolRow>
          <Slot $w={26}><AcctIcon/></Slot>
          <Slot $w={12} $ml={2}><Chev/></Slot>
          <Slot $w={24} $ml={1}><Percent>%</Percent></Slot>
          <Slot $w={24} $ml={1}><CommaIcon/></Slot>
        </ToolRow>
        <ToolRow>
          <Slot $w={24}><DecIcon/></Slot>
          <Slot $w={26} $ml={1}><DecIcon more/></Slot>
        </ToolRow>
      </Stack>
    </GroupBody>
    <GroupLabel $launch>Number</GroupLabel>
    <Launcher><Launch/></Launcher>
  </Group>
  <Group $w={184}>
    <GroupBody $pl={12}>
      <Stack>
        <ToolRow><CondIcon/><StyleText>Conditional Formatting</StyleText><Chev size={9}/></ToolRow>
        <ToolRow><TableIcon/><StyleText>Format as Table</StyleText><Chev size={9}/></ToolRow>
        <ToolRow><CellStyleIcon/><StyleText>Cell Styles</StyleText><Chev size={9}/></ToolRow>
      </Stack>
    </GroupBody>
    <GroupLabel>Styles</GroupLabel>
  </Group>
  <Group $w={105}>
    <GroupBody $pl={12}>
      <Stack>
        <ToolRow><InsertCellIcon/><StyleText>Insert</StyleText><Slot $w={10} $ml={10}><Chev size={9}/></Slot></ToolRow>
        <ToolRow><DeleteCellIcon/><StyleText>Delete</StyleText><Slot $w={10} $ml={10}><Chev size={9}/></Slot></ToolRow>
        <ToolRow><FormatCellIcon/><StyleText>Format</StyleText><Chev size={9}/></ToolRow>
      </Stack>
    </GroupBody>
    <GroupLabel>Cells</GroupLabel>
  </Group>
  <Group $w={106}>
    <GroupBody $pl={13}>
      <Stack>
        <ToolRow><SumIcon/><Slot $w={10} $ml={11}><Chev size={9}/></Slot><Slot $w={18} $ml={9}><SortFilterIcon/></Slot><Slot $w={10} $ml={3}><Chev size={9}/></Slot></ToolRow>
        <ToolRow><FillDown/><Slot $w={10} $ml={4}><Chev size={9}/></Slot><Slot $w={18} $ml={14}><FindIcon/></Slot><Slot $w={10} $ml={3}><Chev size={9}/></Slot></ToolRow>
        <ToolRow><EraseIcon/><Slot $w={10} $ml={4}><Chev size={9}/></Slot></ToolRow>
      </Stack>
    </GroupBody>
    <GroupLabel>Editing</GroupLabel>
  </Group>
  <Group $w={63}>
    <GroupBody>
      <LargeBtn $w={62}><LargeIcon><AddinsIcon/></LargeIcon>Add-ins</LargeBtn>
    </GroupBody>
    <GroupLabel>Add-ins</GroupLabel>
  </Group>
  <Group $w={62}>
    <GroupBody>
      <LargeBtn $w={61}><LargeIcon><AnalyzeIcon/></LargeIcon>Analyze<br/>Data</LargeBtn>
    </GroupBody>
    <GroupLabel>&nbsp;</GroupLabel>
  </Group>
  <Group $w={139}>
    <GroupBody>
      <LargeBtn $w={60}><LargeIcon $dx={6}><PdfIcon/></LargeIcon>Create<br/>a PDF</LargeBtn>
      <LargeBtn $w={64}><LargeIcon $dx={6}><PdfIcon/></LargeIcon>Create a PDF<br/>and Share link</LargeBtn>
    </GroupBody>
    <GroupLabel>Adobe Acrobat</GroupLabel>
  </Group>
  <Group $w={94} $last>
    <Collapse><ChevronUp size={13} color="#444" strokeWidth={1.500}/></Collapse>
  </Group>
</Ribbon>;

const App: FC = () => <Page>
  <Global/>
  <TitleBar>
    <ExcelLogo s={18}/>
    <AutoSave>AutoSave</AutoSave>
    <Toggle>Off</Toggle>
    <Slot $w={16} $ml={13}><SaveIcon/></Slot>
    <Slot $w={20} $ml={10}><Undo c="#444"/></Slot>
    <Slot $w={14}><Chev/></Slot>
    <Slot $w={20} $ml={7}><Redo c="#a5a5a5"/></Slot>
    <Slot $w={14}><Chev color="#aaa"/></Slot>
    <Slot $w={20} $ml={5}><PrintPreview/></Slot>
    <Slot $w={20} $ml={8}><NewDoc/></Slot>
    <Slot $w={20} $ml={8}><Customize/></Slot>
    <DocTitle>UNBILLED REPORT AS ON 29_01_2025... <ChevronDown size={13} color="#333"/></DocTitle>
    <SearchBox><SearchGlyph size={15} color="#555" strokeWidth={1.300} style={{transform: "scaleX(-1)"}}/>Search</SearchBox>
    <Avatar>MK</Avatar>
    <Slot $w={48}><Lightbulb size={17} color="#333" strokeWidth={1.200}/></Slot>
    <Slot $w={48}><Minus size={13} color="#333" strokeWidth={1.200}/></Slot>
    <Slot $w={48}><RestoreIcon/></Slot>
    <Slot $w={48}><X size={15} color="#333" strokeWidth={1.200}/></Slot>
  </TitleBar>
  <TabRow>
    {menu.map(([t, w, g]) => <React.Fragment key={t}>
      <MenuTab $w={w} $active={t === "Home"}>{t}</MenuTab>
      <TabGap $w={g}/>
    </React.Fragment>)}
    <Comments><CommentIcon/>Comments</Comments>
    <Share><ShareIcon/>Share<Chev size={9} color="#fff"/></Share>
  </TabRow>
  <RibbonBar/>
  <FormulaBar>
    <NameBox>F18<Chev size={14}/></NameBox>
    <Slot $w={22}><MoreVertical size={14} color="#444"/></Slot>
    <FxBox>
      <X size={15} color="#b5b5b5" strokeWidth={1.200}/>
      <Check size={15} color="#b5b5b5" strokeWidth={1.200}/>
      <FxText>fx</FxText>
      <Chev size={12} color="#777"/>
    </FxBox>
    <FormulaInput><ChevronDown size={15} color="#444" strokeWidth={1.300}/></FormulaInput>
  </FormulaBar>
  <SheetWrap>
    <SheetGrid/>
    <ScrollCol>
      <ArrowBtn><Triangle $dir="up"/></ArrowBtn>
      <ScrollThumbV/>
      <ArrowBtn><Triangle $dir="down"/></ArrowBtn>
    </ScrollCol>
  </SheetWrap>
  <SheetBar>
    <NavSlot $w={32} $ml={16}><ChevronLeft size={14} color="#999" strokeWidth={1.300}/></NavSlot>
    <NavSlot $w={32}><ChevronRight size={14} color="#999" strokeWidth={1.300}/></NavSlot>
    <Slot $w={30}/>
    {sheets.map(([t, w]) => <SheetTab key={t} $w={w}>{t}</SheetTab>)}
    <SheetTab $w={61} $gap={5} $active>Detail5</SheetTab>
    <SheetTab $w={121} $gap={5}>Unbilled report</SheetTab>
    <SheetTab $w={65}>sheet1</SheetTab>
    <NavSlot $w={32} $ml={32}><Plus size={15} color="#444" strokeWidth={1.200}/></NavSlot>
    <NavSlot $w={20} $ml={102}><MoreVertical size={13} color="#444"/></NavSlot>
    <HScroll><Triangle $dir="left"/><HThumb/><Triangle $dir="right"/></HScroll>
  </SheetBar>
  <StatusBar>
    Ready
    <Slot $w={16} $ml={18}><A11yIcon/></Slot>
    <A11y>Accessibility: Investigate</A11y>
    <ViewBtn $w={39} $on $ml={862}><NormalView/></ViewBtn>
    <ViewBtn $w={41}><PageView/></ViewBtn>
    <ViewBtn $w={40}><BreakView/></ViewBtn>
    <Slot $w={19}><Minus size={10} color="#333"/></Slot>
    <Zoom/>
    <Slot $w={16}><Plus size={11} color="#333"/></Slot>
    <ZoomPct>100%</ZoomPct>
  </StatusBar>
  <Taskbar>
    <News>
      <NewsIcon><NewsLogo/><Badge>1</Badge></NewsIcon>
      <NewsText>Breaking news<NewsSub>Plane collides wi...</NewsSub></NewsText>
    </News>
    <WinLogo/>
    <TaskSearch>
      <SearchGlyph size={17} color="#222" strokeWidth={1.600}/>Search
      <GiftSlot><GiftIcon/></GiftSlot>
    </TaskSearch>
    <Slot $w={2}/>
    <TaskSlot><TaskView/></TaskSlot>
    <TaskSlot><EdgeIcon/></TaskSlot>
    <TaskSlot><AppIcon/></TaskSlot>
    <TaskSlot $running><FolderIcon/></TaskSlot>
    <TaskSlot><StoreIcon/></TaskSlot>
    <TaskSlot $running><FaWhatsapp size={25} color="#1e8a4f"/></TaskSlot>
    <TaskSlot $running><ChromeIcon/></TaskSlot>
    <TaskSlot $active><ExcelLogo s={26}/></TaskSlot>
    <Slot $w={32} $ml={118}><ChevronUp size={16} color="#222" strokeWidth={1.500}/></Slot>
    <Slot $w={32}><CloudIcon/></Slot>
    <Lang>ENG<br/>IN</Lang>
    <Slot $w={32}><MonitorIcon/></Slot>
    <Slot $w={18}><SpeakerIcon/></Slot>
    <Clock>11:32 AM<br/>30-01-2025</Clock>
  </Taskbar>
</Page>;
export default App;
